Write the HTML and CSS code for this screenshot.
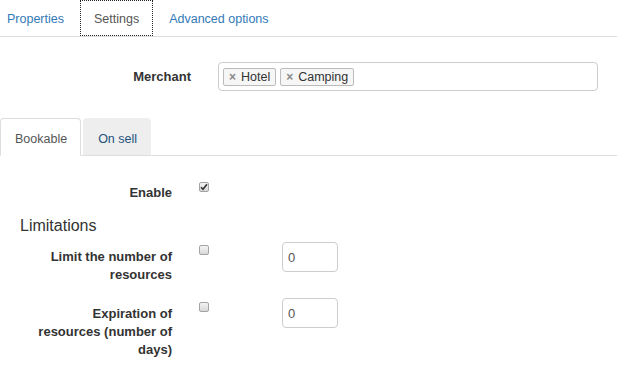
FILE: index.html
```html
<!DOCTYPE html>
<html>
<head>
<meta charset="utf-8">
<link rel="stylesheet" href="styles.css">
</head>
<body>
<ul class="nav-top">
  <li><a class="top-link">Properties</a></li>
  <li><a class="top-link top-active">Settings</a></li>
  <li><a class="top-link">Advanced options</a></li>
</ul>

<div class="merchant-row">
  <label class="merchant-label">Merchant</label>
  <div class="tags-input">
    <span class="tag"><span class="tag-x">×</span>Hotel</span>
    <span class="tag"><span class="tag-x">×</span>Camping</span>
  </div>
</div>

<ul class="nav-sub">
  <li><a class="sub-link sub-active">Bookable</a></li>
  <li><a class="sub-link sub-hover">On sell</a></li>
</ul>

<div class="pane">
  <div class="row row-enable">
    <label class="row-label">Enable</label>
    <div class="check-col">
      <span class="check checked"><svg width="8" height="8" viewBox="0 0 8 8"><path d="M1 4.3 L3 6.3 L7 1.2" fill="none" stroke="#333" stroke-width="1.6"/></svg></span>
    </div>
  </div>

  <h3 class="section-title">Limitations</h3>

  <div class="row row-limit">
    <label class="row-label">Limit the number of resources</label>
    <div class="check-col"><span class="check"></span></div>
    <input class="num-input" type="text" value="0">
  </div>

  <div class="row row-exp">
    <label class="row-label">Expiration of resources (number of days)</label>
    <div class="check-col"><span class="check"></span></div>
    <input class="num-input" type="text" value="0">
  </div>
</div>
</body>
</html>
```

FILE: styles.css
```css
html, body {
  margin: 0;
  padding: 0;
  background: #fff;
  font-family: "Liberation Sans", Arial, sans-serif;
  font-size: 13px;
  color: #333;
}

ul { list-style: none; margin: 0; padding: 0; }

.nav-top {
  display: flex;
  margin-left: -8px;
  border-bottom: 1px solid #ddd;
  font-size: 12.5px;
}
.nav-top li { margin-right: 2px; }
.top-link {
  display: block;
  height: 36px;
  box-sizing: border-box;
  padding: 9px 13px 0 13px;
  line-height: 18px;
  color: #337ab7;
  border: 1px dotted transparent;
  border-bottom: none;
}
.nav-top li:first-child .top-link { padding-left: 14px; }
.top-active {
  color: #555;
  border: 1px dotted #222;
}

.merchant-row {
  display: flex;
  align-items: center;
  margin-top: 25px;
}
.merchant-label {
  width: 191px;
  text-align: right;
  font-weight: bold;
  margin-right: 27px;
}
.tags-input {
  width: 380px;
  height: 29px;
  box-sizing: border-box;
  border: 1px solid #ccc;
  border-radius: 4px;
  display: flex;
  align-items: center;
  padding-left: 4px;
  gap: 4px;
  font-size: 12.5px;
}
.tag {
  display: inline-flex;
  align-items: center;
  height: 18px;
  box-sizing: border-box;
  border: 1px solid #bbb;
  border-radius: 2px;
  background: #f6f6f6;
  padding: 0 5px;
  line-height: 16px;
  color: #333;
}
.tag-x {
  color: #888;
  font-weight: bold;
  font-size: 12px;
  margin-right: 5px;
}

.nav-sub {
  display: flex;
  margin-top: 27px;
  border-bottom: 1px solid #ddd;
  font-size: 12.5px;
}
.nav-sub li { margin-right: 2px; margin-bottom: -1px; }
.sub-link {
  display: block;
  height: 38px;
  box-sizing: border-box;
  padding: 11px 13px 0 14px;
  line-height: 18px;
  border: 1px solid transparent;
  border-radius: 4px 4px 0 0;
}
.sub-active {
  color: #555;
  background: #fff;
  border-color: #ddd;
  border-bottom-color: #fff;
}
.sub-hover {
  color: #23527c;
  background: #eee;
  border-color: #eee;
  border-bottom-color: #ddd;
}

.pane { padding-top: 26px; }

.row {
  display: flex;
  align-items: flex-start;
}
.row-label {
  width: 136px;
  margin-left: 36px;
  text-align: right;
  font-weight: bold;
  line-height: 18px;
}
.check-col {
  width: 110px;
  box-sizing: border-box;
  padding-left: 27px;
}
.check {
  display: block;
  width: 10px;
  height: 10px;
  box-sizing: border-box;
  border: 1px solid #a3a3a3;
  border-radius: 2px;
  background: linear-gradient(#f4f4f4, #d8d8d8);
  position: relative;
}
.check svg { position: absolute; left: 0; top: 0; }

.row-enable .row-label { margin-top: 2px; }

.section-title {
  margin: 14px 0 0 20px;
  font-size: 16px;
  font-weight: normal;
  line-height: 20px;
  color: #333;
}

.row-limit { margin-top: 6px; }
.row-limit .row-label { margin-top: 6px; }
.row-limit .check-col { margin-top: 3px; }

.row-exp { margin-top: 14px; }
.row-exp .row-label { margin-top: 7px; }
.row-exp .check-col { margin-top: 4px; }

.num-input {
  width: 56px;
  height: 30px;
  box-sizing: border-box;
  border: 1px solid #ccc;
  border-radius: 4px;
  padding: 0 5px;
  font-family: "Liberation Sans", Arial, sans-serif;
  font-size: 13px;
  color: #555;
  margin: 0;
}
```
